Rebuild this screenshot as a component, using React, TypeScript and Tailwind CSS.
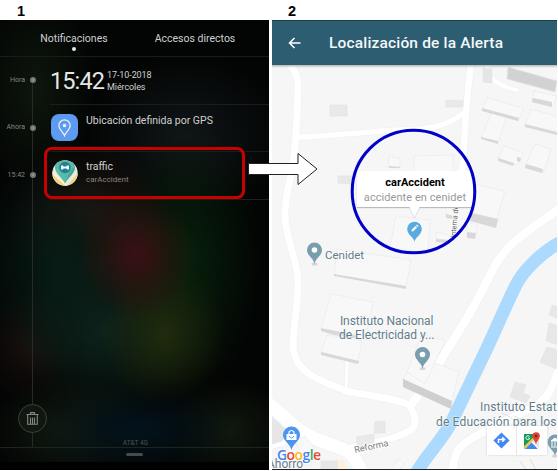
import React from "react";

const roboto = "font-['Roboto','Liberation_Sans',sans-serif]";

function TimelineRow({ time, height, line, children }: { time: string; height: string; line: string; children: React.ReactNode }) {
  return (
    <div className={`flex ${height}`}>
      <div className="flex w-[50px] shrink-0 items-center justify-end pb-[2px] pr-[14px]">
        <span className="mr-[5px] text-[7px] leading-none text-[#858585]">{time}</span>
        <span className="size-[6px] rounded-full border-2 border-[#777] bg-[#999]" />
      </div>
      <div className={`flex flex-1 border-b ${line}`}>{children}</div>
    </div>
  );
}

function TrafficIcon() {
  return (
    <svg width="26" height="26" viewBox="0 0 26 26">
      <defs>
        <clipPath id="round"><circle cx="13" cy="13" r="12.7" /></clipPath>
      </defs>
      <g clipPath="url(#round)">
        <rect width="26" height="26" fill="#e8e9e0" />
        <path d="M0 14 L14 26 H0Z M26 13 L15 26 H26Z" fill="#f4d282" />
        <path d="M0 12 L15 26" stroke="#f8f3d8" strokeWidth="2" />
        <path d="M13 23.5 C10 17 3 14 3 7 C3 -2 23 -2 23 7 C23 14 16 17 13 23.5Z" fill="#58bba8" />
        <path d="M13 23.5 C16 17 23 14 23 7 L18 11Z" fill="#48a794" />
        <circle cx="13" cy="7.5" r="5.7" fill="#257f8c" />
        <path d="M9 5.5 H11 L11.5 6.5 H14.5 L15 5.5 H17 V9.5 H15 L14.5 8.5 H11.5 L11 9.5 H9Z" fill="#e9ffff" />
      </g>
    </svg>
  );
}

function NotificationsPanel() {
  return (
    <section
      className={`relative flex h-[450px] w-[269px] shrink-0 flex-col bg-[#030504] ${roboto} text-[#d0d0d0] bg-[radial-gradient(ellipse_58px_65px_at_137px_235px,#3b1014_0%,#2b1510b0_50%,transparent_100%),radial-gradient(ellipse_62px_70px_at_164px_313px,#202b0d_0%,transparent_100%),radial-gradient(ellipse_90px_90px_at_105px_310px,#0d231b_0%,transparent_100%),radial-gradient(ellipse_85px_110px_at_60px_245px,#071c15_0%,transparent_100%),radial-gradient(ellipse_75px_140px_at_185px_240px,#07200b_0%,transparent_100%),radial-gradient(ellipse_48px_55px_at_30px_325px,#1a0e0d_0%,transparent_100%),radial-gradient(ellipse_100px_48px_at_138px_410px,#03131c_0%,transparent_100%),radial-gradient(ellipse_75px_55px_at_65px_410px,#111a10_0%,transparent_100%),radial-gradient(ellipse_60px_50px_at_230px_410px,#10190d_0%,transparent_100%),radial-gradient(ellipse_80px_70px_at_90px_195px,#231411_0%,transparent_100%),radial-gradient(ellipse_100px_80px_at_185px_115px,#101518_0%,transparent_100%),radial-gradient(ellipse_60px_100px_at_35px_70px,#0d160c_0%,transparent_100%)]`}
    >
      <header className="flex h-[37px] shrink-0 border-b border-[#191d1a] text-[10.5px] leading-[13px]">
        <div className="flex w-[148px] flex-col items-center pt-[12px]">
          <span>Notificaciones</span>
          <span className="mt-[2px] size-[4px] rounded-full bg-[#e8e8e8]" />
        </div>
        <div className="w-[94px] pt-[12px] text-center">Accesos directos</div>
      </header>

      <div className="absolute left-[32px] top-[63px] h-[365px] w-px bg-[#252b28]" />

      <main className="relative">
        <TimelineRow time="Hora" height="h-[48px]" line="border-[#1b1c1b]">
          <div className="flex pt-[8px]">
            <span className="text-[23.5px] leading-[33px] tracking-[-0.9px] text-[#e6e6e6]">15:42</span>
            <span className="pl-[3px] pt-[4px] text-[9px] leading-[12px] tracking-[-0.1px]">
              17-10-2018
              <br />
              Miércoles
            </span>
          </div>
        </TimelineRow>
        <TimelineRow time="Ahora" height="h-[47px]" line="border-[#1b1c1b]">
          <div className="flex pl-[1px] pt-[9px]">
            <div className="flex size-[27px] items-center justify-center rounded-[8px] bg-[#5d9af0]">
              <svg width="13" height="18" viewBox="0 0 13 18" fill="none" stroke="#e7f4ff" strokeWidth="1.25">
                <path d="M6.5 16.6 C5.5 13.5 .9 10.7 .9 6.5 A5.6 5.6 0 0 1 12.1 6.5 C12.1 10.7 7.5 13.5 6.5 16.6Z" />
                <circle cx="6.5" cy="6.5" r="1.2" fill="#fff" />
              </svg>
            </div>
            <span className="pl-[8px] text-[10.5px] leading-[14px]">Ubicación definida por GPS</span>
          </div>
        </TimelineRow>
        <TimelineRow time="15:42" height="h-[48px]" line="border-[#1c201c]">
          <div className="flex pl-[2px] pt-[8px]">
            <TrafficIcon />
            <div className="flex flex-col pl-[8px]">
              <span className="text-[10.5px] leading-[14px]">traffic</span>
              <span className="text-[8px] leading-[12px] text-[#858782]">carAccident</span>
            </div>
          </div>
        </TimelineRow>
      </main>

      <footer className="relative mt-auto flex h-[66px] flex-col">
        <div className="flex h-[44px] border-b border-[#1d251f]">
          <div className="ml-[18px] flex size-[29px] items-center justify-center rounded-full border border-[#3a403b] bg-[#101610]">
            <svg width="13" height="13" viewBox="0 0 13 13" fill="none" stroke="#858984" strokeWidth="1.1">
              <path d="M.5 2.5 H12.5 M4.5 2 V.6 H8.5 V2 M1.7 3 V12.3 H11.3 V3 M4.5 5.5 V12 M6.5 5.5 V12 M8.5 5.5 V12" />
            </svg>
          </div>
          <span className="ml-auto mr-[121px] mt-auto text-[6.5px] leading-[7px] text-[#4c5350]">AT&amp;T 4G</span>
        </div>
        <div className="mx-auto mt-[5px] h-[3px] w-[17px] rounded-full bg-[#454b4c]" />
        <div className="mt-auto h-[8px] bg-black" />
      </footer>
      <div className="absolute left-[44px] top-[127px] h-[52px] w-[201px] rounded-[8px] border-[3px] border-[#c90000]" />
    </section>
  );
}

const roads: [string, number][] = [
  ["M284 58 Q299 72 298 88 C297 110 297 137 293 162 C290 185 285 194 285 215 C285 238 298 260 298 282 C298 305 294 320 293 344 C293 377 330 383 346 391 C368 396 393 397 409 405 C416 416 417 426 411 430 C397 438 380 442 354 447", 7],
  ["M297 137 C330 136 365 132 397 130 C430 130 448 126 465 112", 5.5],
  ["M471 62 Q465 116 464 145 T457 206", 6.5],
  ["M487 65 V72 Q493 84 516 90", 4],
  ["M562 207 C528 231 505 243 491 273 C475 306 463 325 447 350 Q430 379 411 405", 8.5],
  ["M268 403 L300 431 C315 441 342 447 349 452 Q356 458 362 473", 13],
  ["M268 447 L301 437", 6],
  ["M335 338 Q348 350 347 367 L346 391", 3],
  ["M562 359 C553 383 553 397 530 409 C502 423 468 437 458 450 Q454 458 452 472", 8],
];

const buildings: [string, string?][] = [
  ["330,105 347,105 347,116 330,116", "#e9e9e9"],
  ["446,100 463,101 463,107 446,107", "#e9e9e9"],
  ["483,68 492,69 492,83 483,82", "#e5e5e5"],
  ["508,67 557,81 555,92 507,79", "#d2d2d2"],
  ["534,91 557,96 553,107 532,102"],
  ["487,98 524,108 518,121 482,110"],
  ["492,112 507,115 498,143 481,138"],
  ["531,109 559,117 559,134 525,125"],
  ["504,146 524,153 517,165 498,160"],
  ["535,144 551,149 543,173 525,167"],
  ["389,157 400,158 400,168 388,167"],
  ["414,156 453,155 453,174 414,174"],
  ["338,176 353,176 353,184 338,183", "#e8e8e8"],
  ["396,216 430,220 428,253 390,248"],
  ["337,249 411,260 406,287 334,275"],
  ["331,294 373,302 366,336 321,329"],
  ["327,335 362,341 358,362 321,352"],
  ["446,208 454,205 454,218 446,217"],
  ["473,184 505,191 496,222 470,214"],
  ["436,232 451,236 450,242 436,239"],
  ["467,222 477,225 475,237 467,235"],
  ["403,379 419,357 459,372 451,405"],
  ["422,334 445,341 425,384 407,372"],
  ["375,422 385,421 385,433 374,433", "#e7e7e7"],
  ["357,437 374,434 374,444 357,446", "#e9e9e9"],
  ["272,417 286,430 282,441 272,444", "#e6e6e6"],
  ["296,440 305,436 315,448 311,466 302,464"],
  ["321,461 338,461 337,470 321,470", "#e7e7e7"],
  ["398,459 404,463 400,470 391,470"],
  ["515,382 526,385 523,393 530,396 526,403 510,397", "#e7e7e7"],
  ["547,347 558,350 556,369 540,362", "#e7e7e7"],
  ["549,323 559,326 559,345 546,341", "#e7e7e7"],
  ["552,305 559,307 559,319 549,315", "#e7e7e7"],
];

const shades = [
  "533,98 552,102 552,107 532,102", "482,108 519,118 518,121 482,111",
  "481,137 498,141 498,144 481,139", "525,124 557,132 557,135 525,127",
  "498,158 514,163 513,166 498,161", "517,157 521,158 520,162 517,161",
  "526,164 543,169 542,173 525,168", "389,166 400,167 400,168 389,168",
  "334,274 406,286 406,289 334,276", "321,328 355,335 360,339 334,335 321,331",
  "321,352 359,361 358,364 321,355", "472,213 498,219 496,228 470,221",
  "467,232 476,233 475,239 467,238", "436,239 450,240 450,243 436,242",
  "446,214 454,216 454,219 446,218",
];

function MapPin({ x, y, color, children }: { x: number; y: number; color: string; children?: React.ReactNode }) {
  return (
    <g transform={`translate(${x} ${y})`}>
      <ellipse cx="0" cy="13" rx="3" ry="1.5" fill="#d5d5d5" />
      <path d="M0 13 C-1 7 -7.5 4.7 -7.5 -1 A7.5 7.5 0 1 1 7.5 -1 C7.5 4.7 1 7 0 13Z" fill={color} />
      {children ?? <circle cy="-1" r="2.8" fill="#fff" />}
    </g>
  );
}

function MapDrawing() {
  return (
    <svg className="absolute inset-0" width="285" height="404" viewBox="272 65 285 404">
      <rect x="272" y="65" width="285" height="404" fill="#f6f6f6" />
      {roads.map(([d, w]) => <path key={d} d={d} fill="none" stroke="#eeeeee" strokeWidth={w + 1} />)}
      {roads.map(([d, w]) => <path key={d} d={d} fill="none" stroke="#fff" strokeWidth={w} strokeLinecap="round" />)}
      <path d="M563 241 C543 251 523 270 515 287 C503 312 495 331 488 346 L452 421 C444 438 427 454 415 475" fill="none" stroke="#abdafe" strokeWidth="13" />
      {buildings.map(([p, fill]) => <polygon key={p} points={p} fill={fill ?? "#f8f8f8"} stroke="#e4e4e4" strokeWidth=".7" strokeDasharray={fill ? undefined : "2 1"} />)}
      {shades.map((p) => <polygon key={p} points={p} fill="#d8d8d8" />)}
      <path d="M403 379 L452 401 L451 409 L403 387Z" fill="#cfcfcf" />
      <path d="M338 461 L343 459 L347 470 H338Z" fill="#fff0de" />
      <path d="M502 413 L512 418 M514 416 L526 422 M520 461 L526 470 M530 459 L536 470" stroke="#ddd" />

      <MapPin x={314.5} y={251} color="#799eae" />
      <MapPin x={422.5} y={355.5} color="#799eae" />
      <MapPin x={555} y={443} color="#799eae">
        <path d="M-4 -2 L0 -5 L4 -2Z M-3 -1 V3 M0 -1 V3 M3 -1 V3 M-4 4 H4" fill="#fff" stroke="#fff" />
      </MapPin>
      <g transform="translate(291.5 436)">
        <path d="M0 14 C-1 8 -8.5 5 -8.5 -1 A8.5 8.5 0 1 1 8.5 -1 C8.5 5 1 8 0 14Z" fill="#4b95ef" />
        <path d="M-5 -2 H5 V4 H-5Z" fill="#fff" />
        <path d="M-2.5 -2 V-4 Q0 -7 2.5 -4 V-2" fill="none" stroke="#fff" strokeWidth="1.2" />
        <path d="M-2.5 0 Q0 4 2.5 0" fill="none" stroke="#4b95ef" />
      </g>
      <text transform="translate(455.5 238) rotate(-85)" fontFamily="Roboto" fontSize="7.5" letterSpacing="-.1" fill="#666" stroke="#fff" strokeWidth="2" paintOrder="stroke">Interna de</text>
      <text transform="translate(355 453) rotate(-12)" fontFamily="Roboto" fontSize="9" fill="#777" stroke="#fff" strokeWidth="2" paintOrder="stroke">Reforma</text>
    </svg>
  );
}

function MapLabel({ className, children }: { className: string; children: React.ReactNode }) {
  return <div className={`absolute whitespace-nowrap text-[#5f7c89] [text-shadow:0_0_2px_white,0_0_2px_white] ${className}`}>{children}</div>;
}

function AlertMap() {
  return (
    <div className="relative h-[404px] overflow-hidden">
      <MapDrawing />
      <div className="absolute inset-x-0 top-0 h-[3px] bg-gradient-to-b from-[#b7b9ba] to-transparent" />
      <MapLabel className="left-[53px] top-[183px] text-[11.5px] leading-[14px]">Cenidet</MapLabel>
      <MapLabel className="left-[67px] top-[249px] text-center text-[12px] leading-[14px] tracking-[-0.04px]">Instituto Nacional<br />de Electricidad y...</MapLabel>
      <MapLabel className="left-[164px] top-[335px] text-[12px] leading-[15px] tracking-[0.16px]"><span className="ml-[44px]">Instituto Estat</span><br />de Educación para los</MapLabel>
      <MapLabel className="-left-[5px] top-[392px] text-[12px] leading-[14px]">Ahorro</MapLabel>
      <div className="absolute left-[5px] top-[382px] font-['Open_Sans'] text-[14px] font-semibold leading-[16px] tracking-[-0.6px] [text-shadow:0_0_2px_white,0_0_2px_white]">
        <span className="text-[#4285f4]">G</span><span className="text-[#ea4335]">o</span><span className="text-[#fbbc05]">o</span><span className="text-[#4285f4]">g</span><span className="text-[#34a853]">l</span><span className="text-[#ea4335]">e</span>
      </div>

      <div className="absolute left-[215px] top-[361px] flex h-[29px] w-[60px] bg-white/85 shadow-[0_0_2px_#ccc]">
        <div className="flex w-[30px] items-center justify-center border-r border-[#e6e6e6]">
          <svg width="17" height="17" viewBox="0 0 17 17">
            <path d="M8.5 .4 L16.6 8.5 L8.5 16.6 L.4 8.5Z" fill="#4387f2" />
            <path d="M5.5 11 V7.5 H11 M9.2 5.3 L11.5 7.5 L9.2 9.7" fill="none" stroke="#fff" strokeWidth="1.5" />
          </svg>
        </div>
        <div className="flex flex-1 items-center justify-center">
          <svg width="18" height="19" viewBox="0 0 18 19">
            <rect x="1" y="3" width="15" height="15" fill="#e4e4e4" />
            <path d="M1 3 H11 V8 L1 18Z" fill="#159b57" />
            <path d="M2 18 L9 11 L15 18Z" fill="#4387f2" />
            <path d="M1 17 L11 7" stroke="#f7cc41" strokeWidth="2" />
            <path d="M9 11 L16 18" stroke="#fff" strokeWidth="1.3" />
            <path d="M6.5 5.5 A2 2 0 1 0 6.5 8 V7 H5" fill="none" stroke="#fff" strokeWidth=".9" />
            <path d="M13 14 C12.7 10 9.3 8 9.3 5 A3.8 3.8 0 0 1 16.9 5 C16.9 8 13.3 10 13 14Z" fill="#dc4437" />
            <circle cx="13" cy="5" r="1.3" fill="#831b1b" />
          </svg>
        </div>
      </div>

      <div className="absolute left-[85px] top-[106px] h-[36px] w-[116px] bg-white pt-[5px] text-center shadow-[0_1px_1px_#bbb]">
        <div className="text-[11px] font-bold leading-[13px] text-black">carAccident</div>
        <div className="text-[11px] leading-[17px] tracking-[0.06px] text-[#999]">accidente en cenidet</div>
      </div>
      <svg className="absolute left-[137px] top-[141px]" width="12" height="37" viewBox="0 0 12 37" overflow="visible">
        <path d="M0 0 L5.5 12 L11 0Z" fill="#fff" />
        <path d="M0 1 L5.5 12 L11 1" fill="none" stroke="#d1d1d1" strokeWidth=".6" />
        <path d="M5.5 36 C5 31 -1.8 29 -1.8 23 A7.3 7.3 0 0 1 12.8 23 C12.8 29 6 31 5.5 36Z" fill="#5aaae0" />
        <path d="M3 25 L7.2 20.8" stroke="#fff" strokeWidth="2.2" />
        <path d="M7.8 20.2 L8.7 19.3" stroke="#fff" strokeWidth="2.2" />
      </svg>
    </div>
  );
}

function AlertPanel() {
  return (
    <section className={`flex h-[450px] w-[285px] flex-col border-b border-[#222] ${roboto}`}>
      <header className="flex h-[45px] items-center border-t border-[#203d47] bg-[#2d5d70] pl-[16px] text-white">
        <svg width="13" height="12" viewBox="0 0 13 12" fill="none" stroke="#fff" strokeWidth="1.5">
          <path d="M12.5 6 H1.5 M6.5 1 L1.5 6 L6.5 11" />
        </svg>
        <h1 className="ml-[28px] pt-[2px] text-[15.5px] font-medium tracking-[0.17px] text-[#f4f8fa]">Localización de la Alerta</h1>
      </header>
      <AlertMap />
    </section>
  );
}

export default function App() {
  return (
    <div className="relative h-[471px] w-[558px] overflow-hidden bg-white">
      <div className="flex h-[20px] font-['Liberation_Sans',sans-serif] text-[14.5px] font-bold leading-[22px] text-black">
        <span className="w-[271px] pl-[17px]">1</span>
        <span className="pl-[17px]">2</span>
      </div>
      <div className="flex gap-[3px]">
        <NotificationsPanel />
        <AlertPanel />
      </div>
      <svg className="pointer-events-none absolute inset-0" width="558" height="471" viewBox="0 0 558 471" fill="none">
        <path d="M248.5 163.5 H298 V153.5 L317 169 L298 184.5 V174.5 H248.5Z" fill="#fff" stroke="#222" />
        <circle cx="413.5" cy="191.5" r="61.3" stroke="#0000c8" strokeWidth="3" />
      </svg>
    </div>
  );
}
